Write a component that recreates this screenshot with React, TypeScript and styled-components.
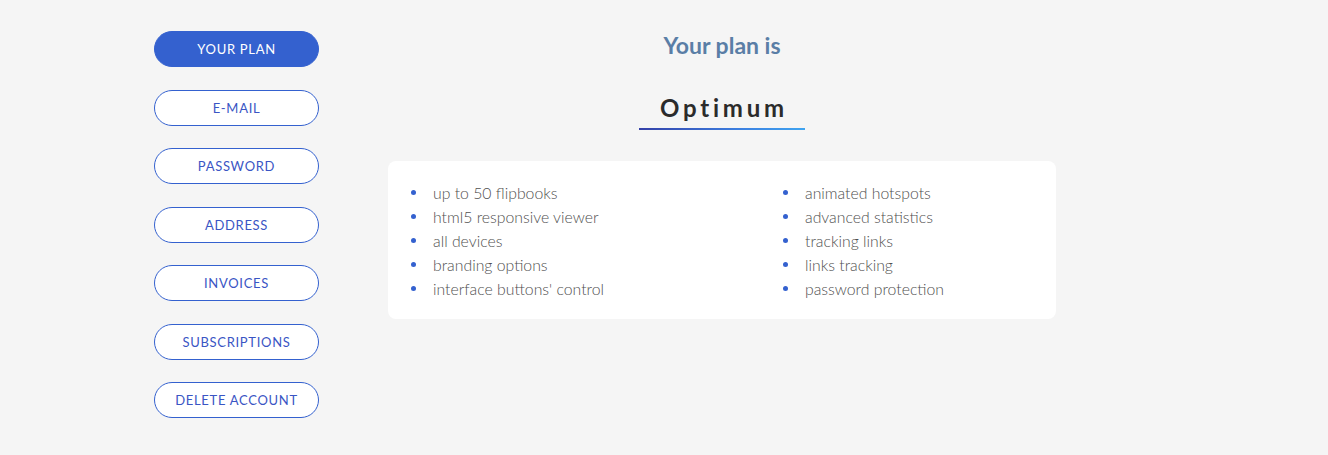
import React from "react";
import styled, { createGlobalStyle } from "styled-components";

const GlobalStyle = createGlobalStyle`
  html, body {
    margin: 0;
    padding: 0;
    background: #f5f5f5;
    font-family: Lato, "Open Sans", Arial, sans-serif;
  }
`;

const Page = styled.div`
  display: flex;
  align-items: flex-start;
  gap: 69px;
  padding: 31px 0 0 154px;
  min-height: 455px;
  box-sizing: border-box;
`;

const Nav = styled.nav`
  display: flex;
  flex-direction: column;
  gap: 22.5px;
`;

const NavButton = styled.button<{ $active?: boolean }>`
  width: 165px;
  height: 36px;
  border-radius: 18px;
  border: 1px solid #3461cf;
  background: ${({ $active }) => ($active ? "#3461cf" : "#fff")};
  color: ${({ $active }) => ($active ? "#fff" : "#3a55c4")};
  font-family: Lato, Arial, sans-serif;
  font-size: 13px;
  font-weight: 400;
  letter-spacing: 0.7px;
  text-transform: uppercase;
  cursor: pointer;
  padding: 0;
`;

const Main = styled.main`
  width: 668px;
  display: flex;
  flex-direction: column;
  align-items: center;
`;

const Title = styled.h2`
  margin: 1px 0 0;
  font-size: 23px;
  line-height: 26px;
  font-weight: 700;
  color: #5a7ea6;
`;

const PlanName = styled.div`
  margin-top: 35px;
  padding: 0 17px 7px 21px;
  font-size: 24px;
  line-height: 30px;
  font-weight: 700;
  letter-spacing: 3.8px;
  color: #2b2b2b;
  position: relative;

  &::after {
    content: "";
    position: absolute;
    left: 0;
    right: 0;
    bottom: 0;
    height: 2px;
    background: linear-gradient(90deg, #3440a8 0%, #3c7fe0 60%, #3fa4f0 100%);
  }
`;

const Card = styled.div`
  align-self: stretch;
  margin-top: 31px;
  background: #fff;
  border-radius: 8px;
  padding: 19px 0 19px 23px;
  display: grid;
  grid-template-columns: 372px 1fr;
`;

const List = styled.ul`
  list-style: none;
  margin: 0;
  padding: 0;
`;

const Item = styled.li`
  display: flex;
  align-items: center;
  gap: 16px;
  height: 24px;
  font-size: 15.8px;
  font-weight: 300;
  color: #505050;

  &::before {
    content: "";
    width: 5px;
    height: 5px;
    border-radius: 50%;
    background: #3461cf;
    flex: none;
    margin-right: 1px;
  }
`;

const navItems = [
  "Your plan",
  "E-mail",
  "Password",
  "Address",
  "Invoices",
  "Subscriptions",
  "Delete account",
];

const features = [
  [
    "up to 50 flipbooks",
    "html5 responsive viewer",
    "all devices",
    "branding options",
    "interface buttons' control",
  ],
  [
    "animated hotspots",
    "advanced statistics",
    "tracking links",
    "links tracking",
    "password protection",
  ],
];

export default function App() {
  return (
    <>
      <GlobalStyle />
      <Page>
        <Nav>
          {navItems.map((label, i) => (
            <NavButton key={label} $active={i === 0}>
              {label}
            </NavButton>
          ))}
        </Nav>
        <Main>
          <Title>Your plan is</Title>
          <PlanName>Optimum</PlanName>
          <Card>
            {features.map((col, i) => (
              <List key={i}>
                {col.map((f) => (
                  <Item key={f}>{f}</Item>
                ))}
              </List>
            ))}
          </Card>
        </Main>
      </Page>
    </>
  );
}
